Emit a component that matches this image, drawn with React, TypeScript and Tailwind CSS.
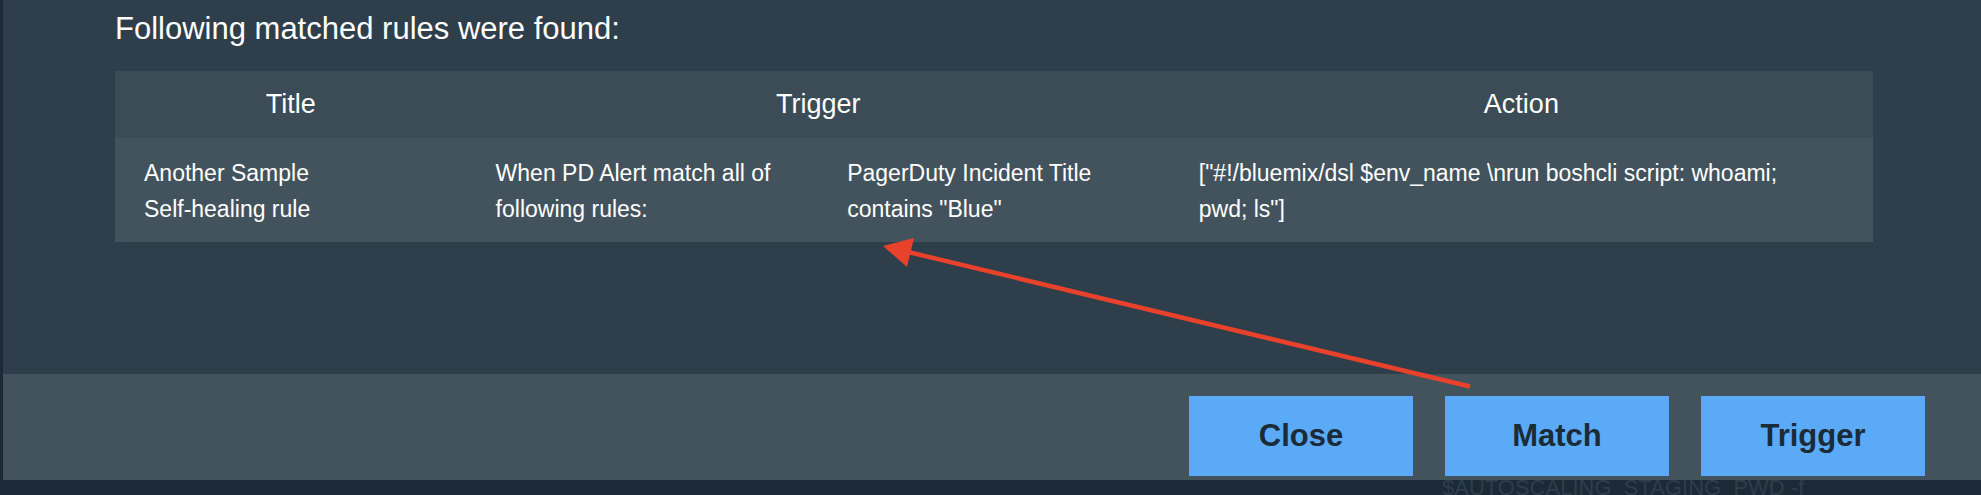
import React from "react";

type Rule = {
    title: string;
    when: string;
    condition: string;
    action: string;
};

const rules: Rule[] = [
    {
        title: "Another Sample Self-healing rule",
        when: "When PD Alert match all of following rules:",
        condition: 'PagerDuty Incident Title contains "Blue"',
        action: '["#!/bluemix/dsl $env_name \\nrun boshcli script: whoami; pwd; ls"]',
    },
];

const buttons = ["Close", "Match", "Trigger"];

export default function App() {
    return (
        <div className="relative flex h-[495px] w-[1981px] overflow-hidden bg-[#1b2a36] pl-[3px] font-['Liberation_Sans',Arial,sans-serif]">
            <div className="flex flex-1 flex-col">
                <div className="flex h-[480px] flex-col bg-[#2e3e4a]">
                    <div className="flex-1 pl-[112px] pr-[108px] pt-[11px]">
                        <h2 className="text-[31px] leading-[36px] text-white">Following matched rules were found:</h2>
                        <table className="mt-[24px] w-full table-fixed border-collapse text-white">
                            <colgroup>
                                <col className="w-[20%]" />
                                <col className="w-[20%]" />
                                <col className="w-[20%]" />
                                <col className="w-[40%]" />
                            </colgroup>
                            <thead className="bg-[#3b4c57]">
                                <tr className="h-[67px]">
                                    <th className="p-0 text-center text-[27px] font-normal">Title</th>
                                    <th colSpan={2} className="p-0 text-center text-[27px] font-normal">
                                        Trigger
                                    </th>
                                    <th className="p-0 text-center text-[27px] font-normal">Action</th>
                                </tr>
                            </thead>
                            <tbody className="bg-[#43535d]">
                                {rules.map((rule) => (
                                    <tr key={rule.title} className="text-[23px] leading-[36px]">
                                        <td className="pb-[15px] pl-[29px] pr-[120px] pt-[17px] align-top">{rule.title}</td>
                                        <td className="pb-[15px] pl-[29px] pr-[40px] pt-[17px] align-top">{rule.when}</td>
                                        <td className="pb-[15px] pl-[29px] pr-[40px] pt-[17px] align-top">{rule.condition}</td>
                                        <td className="pb-[15px] pl-[29px] pr-[64px] pt-[17px] align-top">{rule.action}</td>
                                    </tr>
                                ))}
                            </tbody>
                        </table>
                    </div>
                    <div className="flex h-[106px] justify-end gap-[32px] bg-[#43535d] pr-[56px] pt-[22px]">
                        {buttons.map((label) => (
                            <button
                                key={label}
                                className="h-[80px] w-[224px] bg-[#5aaaf7] text-[31px] font-bold text-[#1b2b38]"
                            >
                                {label}
                            </button>
                        ))}
                    </div>
                </div>
                <div className="h-[15px] overflow-hidden whitespace-nowrap pl-[1439px] text-[22px] leading-[15px] text-[#2d3e4c]">
                    $AUTOSCALING_STAGING_PWD -f
                </div>
            </div>
            {/* annotation arrow */}
            <svg className="pointer-events-none absolute left-0 top-0" width="1981" height="495" viewBox="0 0 1981 495">
                <line x1="1470" y1="386.5" x2="906" y2="251.5" stroke="#e8412c" strokeWidth="4.5" />
                <polygon points="883,246 914,238 907,267" fill="#e8412c" />
            </svg>
        </div>
    );
}
